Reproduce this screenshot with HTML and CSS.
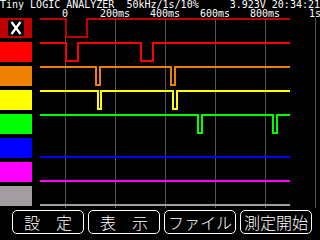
FILE: index.html
```html
<!DOCTYPE html>
<html lang="ja">
<head>
<meta charset="utf-8">
<title>Tiny LOGIC ANALYZER</title>
<link rel="stylesheet" href="styles.css">
</head>
<body>
<div class="screen">
  <header class="top">
    <div class="title-row">
      <span class="title">Tiny LOGIC ANALYZER  50kHz/1s/10%</span>
      <span class="status">3.923V 20:34:21</span>
    </div>
    <div class="axis">
      <span>0</span><span>200ms</span><span>400ms</span><span>600ms</span><span>800ms</span><span>1s</span>
    </div>
  </header>
  <main class="plot">
    <div class="legend">
      <div class="chan c0">
        <span class="clear">
          <svg width="16" height="16" viewBox="0 0 16 16"><path d="M3.5 2 L12.5 14 M12.5 2 L3.5 14" stroke="#fff" stroke-width="2.2" fill="none"/></svg>
        </span>
      </div>
      <div class="chan c1"></div>
      <div class="chan c2"></div>
      <div class="chan c3"></div>
      <div class="chan c4"></div>
      <div class="chan c5"></div>
      <div class="chan c6"></div>
      <div class="chan c7"></div>
    </div>
    <svg class="traces" width="284" height="192" viewBox="36 18 284 192">
      <g class="grid">
        <path d="M65.5 18 V208 M115.5 18 V208 M165.5 18 V208 M215.5 18 V208 M265.5 18 V208 M315.5 18 V208"/>
      </g>
      <g class="wave">
        <path class="w0" d="M40 19 H66 V37 H87 V19 H290"/>
        <path class="w1" d="M40 43 H66 V61 H78 V43 H141 V61 H153 V43 H290"/>
        <path class="w2" d="M40 67 H96 V85 H100 V67 H171 V85 H175 V67 H290"/>
        <path class="w3" d="M40 91 H98 V109 H101 V91 H173 V109 H177 V91 H290"/>
        <path class="w4" d="M40 115 H198 V133 H202 V115 H273 V133 H277 V115 H290"/>
        <path class="w5" d="M40 157 H290"/>
        <path class="w6" d="M40 181 H290"/>
        <path class="w7" d="M40 205 H290"/>
      </g>
    </svg>
  </main>
  <footer class="buttons">
    <button class="btn">設　定</button>
    <button class="btn">表　示</button>
    <button class="btn">ファイル</button>
    <button class="btn">測定開始</button>
  </footer>
</div>
</body>
</html>
```
FILE: styles.css
```css
html, body {
  margin: 0;
  padding: 0;
  background: #000;
}
.screen {
  width: 320px;
  height: 240px;
  overflow: hidden;
  background: #000;
  color: #fff;
  font-family: "DejaVu Sans Mono", "Liberation Mono", monospace;
}
.top {
  height: 18px;
  font-size: 10px;
  line-height: 9px;
}
.title-row {
  display: flex;
  justify-content: space-between;
  height: 9px;
  white-space: pre;
}
.axis {
  display: flex;
  height: 9px;
  padding-left: 40px;
  white-space: pre;
}
.axis span {
  flex: 0 0 50px;
  text-align: center;
}
.plot {
  display: flex;
  height: 192px;
}
.legend {
  display: flex;
  flex-direction: column;
  gap: 4px;
  width: 32px;
  margin-right: 4px;
}
.chan {
  height: 20px;
  display: flex;
  align-items: center;
  justify-content: center;
}
.c0 { background: #c00000; }
.c1 { background: #ff0000; }
.c2 { background: #f08000; }
.c3 { background: #ffff00; }
.c4 { background: #00ff00; }
.c5 { background: #0000ff; }
.c6 { background: #ff00ff; }
.c7 { background: #a39ca0; }
.clear {
  display: block;
  width: 16px;
  height: 16px;
  background: #000;
}
.clear svg { display: block; }
.traces {
  display: block;
  flex: 0 0 284px;
}
.grid path {
  stroke: #555;
  stroke-width: 1;
  fill: none;
  shape-rendering: crispEdges;
}
.wave path {
  fill: none;
  stroke-width: 2;
  stroke-linejoin: miter;
  shape-rendering: crispEdges;
}
.w0 { stroke: #c00000; }
.w1 { stroke: #ff0000; }
.w2 { stroke: #f08000; }
.w3 { stroke: #ffff00; }
.w4 { stroke: #00ff00; }
.w5 { stroke: #0000ff; }
.w6 { stroke: #ff00ff; }
.w7 { stroke: #a39ca0; }
.buttons {
  display: flex;
  gap: 4px;
  padding-left: 12px;
  height: 24px;
}
.btn {
  box-sizing: border-box;
  width: 72px;
  height: 24px;
  margin: 0;
  padding: 0;
  border: 1px solid #fff;
  border-radius: 5px;
  background: #000;
  color: #fff;
  font-family: "Noto Sans CJK JP", "Noto Sans CJK SC", sans-serif;
  font-weight: 300;
  font-size: 16px;
  line-height: 16px;
  display: flex;
  align-items: center;
  justify-content: center;
}
```
